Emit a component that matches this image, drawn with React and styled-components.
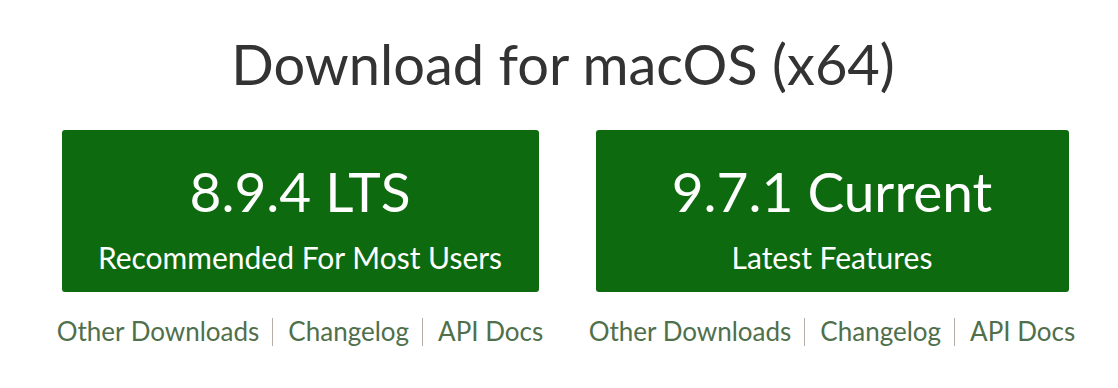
import React from "react";
import styled, { createGlobalStyle } from "styled-components";

const Global = createGlobalStyle`
  html, body { margin: 0; padding: 0; background: #fff; }
  body { font-family: "Lato", "Liberation Sans", sans-serif; }
`;

const Page = styled.main`
  width: 1118px;
  height: 388px;
  box-sizing: border-box;
  padding: 36px 0 0 8px;
  display: flex;
  flex-direction: column;
  align-items: center;
`;

const Title = styled.h1`
  margin: 0;
  font-weight: 400;
  font-size: 56px;
  line-height: 56px;
  color: #333;
`;

const Columns = styled.div`
  margin-top: 38px;
  padding-left: 6px;
  display: flex;
  gap: 32px;
`;

const Column = styled.section`
  width: 500px;
  display: flex;
  flex-direction: column;
  align-items: center;
`;

const DownloadButton = styled.a`
  box-sizing: border-box;
  width: ${(p) => p.$width}px;
  height: 162px;
  border-radius: 3px;
  background: #0e6a0f;
  color: #fff;
  text-decoration: none;
  display: flex;
  flex-direction: column;
  align-items: center;
  padding-top: 33px;
`;

const Version = styled.span`
  font-size: 55px;
  line-height: 56px;
`;

const Caption = styled.span`
  margin-top: 23px;
  font-size: 30px;
  line-height: 30px;
`;

const Links = styled.nav`
  margin-top: 24px;
  display: flex;
  align-items: center;
  font-size: 26px;
  line-height: 30px;
`;

const Link = styled.a`
  color: #506f4b;
  text-decoration: none;
`;

const Sep = styled.span`
  display: inline-block;
  width: 1px;
  height: 28px;
  background: #b5aea6;
  margin: 2px 15px 0 13px;
`;

const releases = [
  { version: "8.9.4 LTS", caption: "Recommended For Most Users", width: 477 },
  { version: "9.7.1 Current", caption: "Latest Features", width: 473 },
];

export default function App() {
  return (
    <>
      <Global />
      <Page>
        <Title>Download for macOS (x64)</Title>
        <Columns>
          {releases.map((r) => (
            <Column key={r.version}>
              <DownloadButton href="#" $width={r.width}>
                <Version>{r.version}</Version>
                <Caption>{r.caption}</Caption>
              </DownloadButton>
              <Links>
                <Link href="#">Other Downloads</Link>
                <Sep />
                <Link href="#">Changelog</Link>
                <Sep />
                <Link href="#">API Docs</Link>
              </Links>
            </Column>
          ))}
        </Columns>
      </Page>
    </>
  );
}
